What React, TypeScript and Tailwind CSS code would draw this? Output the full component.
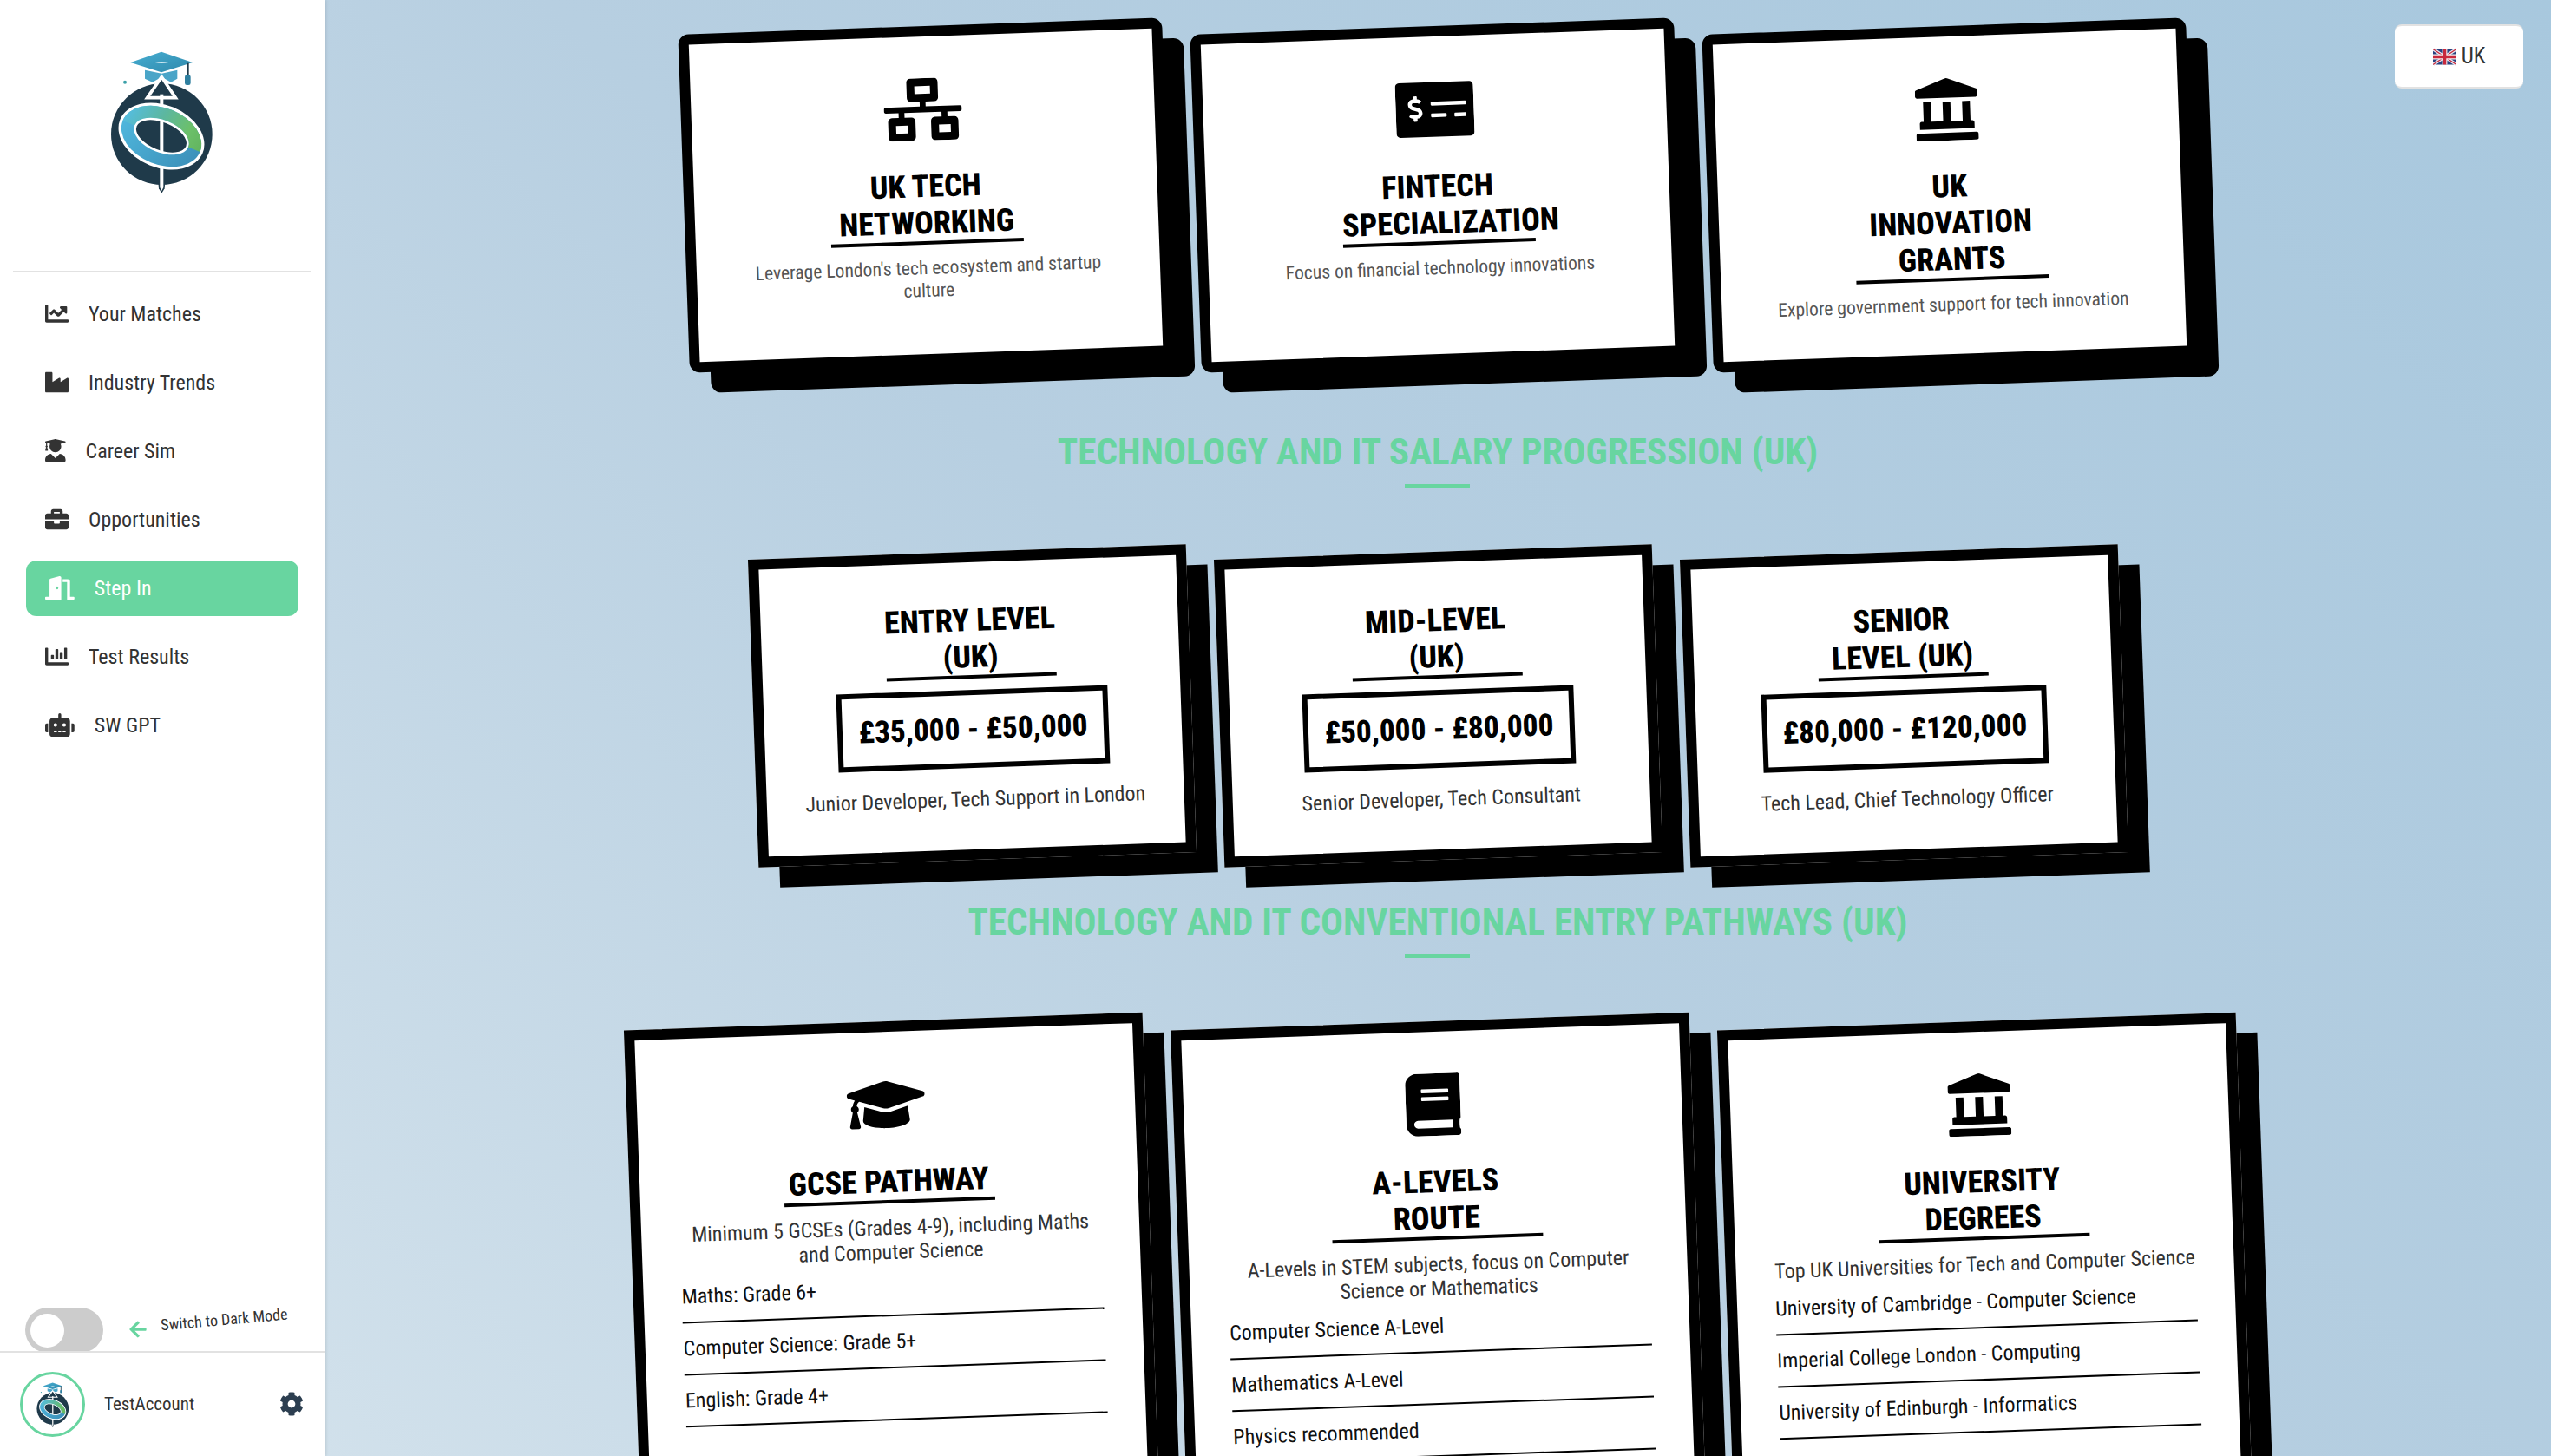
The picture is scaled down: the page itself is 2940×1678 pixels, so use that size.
import React from "react";
import {
  FaChartLine, FaIndustry, FaUserGraduate, FaBriefcase, FaDoorOpen, FaChartBar, FaRobot, FaCog, FaArrowLeft,
  FaNetworkWired, FaMoneyCheckAlt, FaLandmark, FaGraduationCap, FaBook,
} from "react-icons/fa";

function Logo({ className, id }: { className?: string; id: string }) {
  return (
    <svg viewBox="380 170 360 495" className={className}>
      <defs>
        <linearGradient id={`${id}-top`} gradientUnits="userSpaceOnUse" x1="413" y1="430" x2="700" y2="480">
          <stop offset="0" stopColor="#55bde0" />
          <stop offset="0.4" stopColor="#5cb7a0" />
          <stop offset="0.75" stopColor="#6cc06a" />
          <stop offset="1" stopColor="#62b45f" />
        </linearGradient>
        <linearGradient id={`${id}-bot`} gradientUnits="userSpaceOnUse" x1="420" y1="450" x2="690" y2="560">
          <stop offset="0" stopColor="#4fb6dc" />
          <stop offset="1" stopColor="#3b8fb8" />
        </linearGradient>
        <linearGradient id={`${id}-cap`} x1="0" y1="0" x2="1" y2="1">
          <stop offset="0" stopColor="#46aed2" />
          <stop offset="1" stopColor="#2f88ab" />
        </linearGradient>
      </defs>
      <circle cx="558" cy="460" r="175" fill="#1f3a4a" />
      <path d="M500 238 L558 250 L612 238 L612 268 L590 280 L558 262 L526 280 L500 268 Z" fill="#4aa5c8" />
      <path d="M450 212 L557 175 L665 212 L557 246 Z" fill={`url(#${id}-cap)`} />
      <path d="M535 212 Q557 206 582 212 Q557 218 535 212Z" fill="#cfe8f2" />
      <rect x="644" y="214" width="8" height="45" fill="#1f3a4a" />
      <rect x="638" y="255" width="20" height="35" rx="7" fill="#2f7f9f" />
      <circle cx="431" cy="280" r="6" fill="#3aa0a8" />
      <path d="M558 262 L508 334 L606 334 Z" fill="#1f3a4a" stroke="#fff" strokeWidth="11" strokeLinejoin="miter" />
      <path d="M546 625 L570 625 L568 648 L558 664 L548 648 Z" fill="#1f3a4a" />
      <rect x="552" y="322" width="12" height="322" fill="#fff" />
      <path d="M552 644 L564 644 L558 656 Z" fill="#fff" />
      <g transform="rotate(22 557 467)">
        <ellipse cx="557" cy="467" rx="154" ry="108" fill="#fff" />
        <ellipse cx="557" cy="467" rx="144" ry="98" fill={`url(#${id}-bot)`} />
        <path d="M413 467 A144 98 0 0 1 701 467 L657 467 A100 56 0 0 0 457 467 Z" fill={`url(#${id}-top)`} />
        <ellipse cx="557" cy="467" rx="100" ry="56" fill="#fff" />
        <ellipse cx="557" cy="467" rx="92" ry="48" fill="#1f3a4a" />
      </g>
      <rect x="552" y="412" width="12" height="112" fill="#fff" />
    </svg>
  );
}

const nav = [
  { label: "Your Matches", Icon: FaChartLine, w: "w-[27px]" },
  { label: "Industry Trends", Icon: FaIndustry, w: "w-[27px]" },
  { label: "Career Sim", Icon: FaUserGraduate, w: "w-[23.6px]" },
  { label: "Opportunities", Icon: FaBriefcase, w: "w-[27px]" },
  { label: "Step In", Icon: FaDoorOpen, w: "w-[33.75px]", active: true },
  { label: "Test Results", Icon: FaChartBar, w: "w-[27px]" },
  { label: "SW GPT", Icon: FaRobot, w: "w-[33.75px]" },
];

function Sidebar() {
  return (
    <aside className="w-[374px] shrink-0 h-full bg-white flex flex-col shadow-[2px_0_3px_rgba(0,0,0,0.1)] relative z-10">
      <div className="flex justify-center pt-[58px] h-[314px] mx-[15px] border-b-2 border-[#e2e2e2]">
        <Logo id="a" className="w-[120px] h-[165px]" />
      </div>
      <nav className="flex flex-col px-[30px] pt-[8px]">
        {nav.map(({ label, Icon, active, w }) => (
          <div
            key={label}
            className={
              active
                ? "h-[64px] my-[7.5px] rounded-xl bg-[#68d5a0] text-white flex items-center gap-[23px] px-[22px] text-[24px]"
                : "h-[64px] my-[7.5px] rounded-xl text-[#333] flex items-center gap-[23px] px-[22px] text-[24px]"
            }
          >
            <Icon className={`h-[27px] ${w} shrink-0`} />
            <span className="[font-stretch:75%]">{label}</span>
          </div>
        ))}
      </nav>
      <div className="mt-auto flex flex-col">
        <div className="flex items-center pl-[29px] h-[50px]">
          <div className="w-[90px] h-[52px] rounded-full bg-[#ccc] flex items-center pl-[6px] shrink-0 mt-[2px]">
            <div className="w-[39px] h-[39px] rounded-full bg-white" />
          </div>
          <FaArrowLeft className="ml-[29px] text-[#68d5a0] w-[22px] h-[22px] shrink-0" />
          <span className="ml-[15px] -mt-[24px] -rotate-[5deg] text-[18px] text-[#333] whitespace-nowrap [font-stretch:75%]">Switch to Dark Mode</span>
        </div>
        <div className="border-t-2 border-[#e2e2e2] h-[121px] flex items-center pl-[23px] pr-[24px]">
          <div className="w-[75px] h-[75px] rounded-full border-[3px] border-[#68d5a0] flex items-center justify-center shrink-0">
            <Logo id="b" className="w-[38px] h-[52px]" />
          </div>
          <span className="ml-[22px] text-[21px] text-[#333] [font-stretch:75%]">TestAccount</span>
          <FaCog className="ml-auto -mt-[2px] text-[#2c3e50] w-[28px] h-[28px]" />
        </div>
      </div>
    </aside>
  );
}

function Title({ lines, w }: { lines: string[]; w: string }) {
  return (
    <h3 className={`${w} border-b-4 border-black text-[36px] leading-[42px] font-extrabold text-black uppercase text-center [font-stretch:75%]`}>
      {lines.map((l) => (
        <div key={l} className="whitespace-nowrap">{l}</div>
      ))}
    </h3>
  );
}

const feats = [
  { Icon: FaNetworkWired, w: "w-[90px]", t: ["UK Tech", "Networking"], d: "Leverage London's tech ecosystem and startup culture" },
  { Icon: FaMoneyCheckAlt, w: "w-[90px]", t: ["Fintech", "Specialization"], d: "Focus on financial technology innovations" },
  { Icon: FaLandmark, w: "w-[72px]", t: ["UK", "Innovation", "Grants"], d: "Explore government support for tech innovation" },
];

const salaries = [
  { t: ["Entry Level", "(UK)"], s: "£35,000 - £50,000", d: "Junior Developer, Tech Support in London" },
  { t: ["Mid-Level", "(UK)"], s: "£50,000 - £80,000", d: "Senior Developer, Tech Consultant" },
  { t: ["Senior", "Level (UK)"], s: "£80,000 - £120,000", d: "Tech Lead, Chief Technology Officer" },
];

const paths = [
  {
    Icon: FaGraduationCap,
    w: "w-[90px]",
    t: ["GCSE Pathway"],
    d: "Minimum 5 GCSEs (Grades 4-9), including Maths and Computer Science",
    items: ["Maths: Grade 6+", "Computer Science: Grade 5+", "English: Grade 4+"],
  },
  {
    Icon: FaBook,
    w: "w-[63px]",
    t: ["A-Levels", "Route"],
    d: "A-Levels in STEM subjects, focus on Computer Science or Mathematics",
    items: ["Computer Science A-Level", "Mathematics A-Level", "Physics recommended"],
  },
  {
    Icon: FaLandmark,
    w: "w-[72px]",
    t: ["University", "Degrees"],
    d: "Top UK Universities for Tech and Computer Science",
    items: ["University of Cambridge - Computer Science", "Imperial College London - Computing", "University of Edinburgh - Informatics"],
  },
];

function SectionTitle({ children, className }: { children: string; className: string }) {
  return (
    <div className={`flex flex-col items-center ${className}`}>
      <h2 className="text-[43.2px] leading-[54px] font-bold text-[#68d5a0] uppercase text-center whitespace-nowrap [font-stretch:75%]">
        {children}
      </h2>
      <div className="w-[75px] h-1 bg-[#68d5a0] mt-[10px]" />
    </div>
  );
}

function Flag() {
  return (
    <svg viewBox="0 0 60 40" className="w-[27px] h-[21px] rounded-[2px]">
      <rect width="60" height="40" fill="#27407f" />
      <path d="M0 0 L60 40 M60 0 L0 40" stroke="#e8e8f0" strokeWidth="8" />
      <path d="M0 0 L60 40 M60 0 L0 40" stroke="#c8283c" strokeWidth="3" />
      <path d="M30 0 V40 M0 20 H60" stroke="#f4f0f0" strokeWidth="13" />
      <path d="M30 0 V40 M0 20 H60" stroke="#c8283c" strokeWidth="8" />
    </svg>
  );
}

export default function App() {
  return (
    <div className="h-[1678px] w-full flex overflow-hidden bg-[linear-gradient(45deg,#d6e4ed_0%,#b7cfe1_50%,#a8c8de_100%)] [font-family:Roboto,'Liberation_Sans',sans-serif]">
      <Sidebar />
      <main className="flex-1 min-w-0 h-full overflow-hidden relative flex flex-col items-center pt-[30px]">
        <div className="absolute top-[28px] right-[32px] w-[148px] h-[74px] bg-white rounded-lg border-y-2 border-[#e2e2e2] flex items-center justify-center gap-[6px] text-[25px] text-[#333]">
          <Flag />
          <span className="[font-stretch:75%]">UK</span>
        </div>

        <div className="grid grid-cols-3 gap-[32px] w-[1738px] shrink-0">
          {feats.map(({ Icon, w, t, d }) => (
            <div key={d} className="-rotate-2 bg-white border-[12px] border-black rounded-xl shadow-[24px_24px_0_#000] p-12 h-[390px] flex flex-col items-center text-center">
              <Icon className={`h-[72px] ${w} text-black shrink-0 mb-8`} />
              <Title lines={t} w="w-[222px]" />
              <p className="mt-[14px] text-[21.6px] leading-[26px] text-[#555] [font-stretch:75%]">{d}</p>
            </div>
          ))}
        </div>

        <SectionTitle className="mt-[74px]">Technology and IT Salary Progression (UK)</SectionTitle>

        <div className="grid grid-cols-3 gap-[32px] w-[1579px] shrink-0 mt-[74px]">
          {salaries.map(({ t, s, d }) => (
            <div key={d} className="-rotate-2 bg-white border-[12px] border-black shadow-[24px_24px_0_#000] pt-[46px] px-6 h-[355px] flex flex-col items-center text-center">
              <Title lines={t} w="w-[196px]" />
              <div className="mt-[13px] border-[6px] border-black px-[18px] h-[90px] flex items-center text-[35.2px] font-extrabold text-black whitespace-nowrap [font-stretch:75%]">
                {s}
              </div>
              <p className="mt-[22px] text-[24px] leading-[28px] text-[#333] [font-stretch:75%]">{d}</p>
            </div>
          ))}
        </div>

        <SectionTitle className="mt-[45px]">Technology and IT Conventional Entry Pathways (UK)</SectionTitle>

        <div className="grid grid-cols-3 gap-[32px] w-[1858px] shrink-0 mt-[73px]">
          {paths.map(({ Icon, w, t, d, items }) => (
            <div key={d} className="-rotate-2 bg-white border-[12px] border-black shadow-[24px_24px_0_#000] pt-12 px-[44px] h-[530px] flex flex-col items-center text-center">
              <Icon className={`h-[72px] ${w} text-black shrink-0 mb-8`} />
              <Title lines={t} w="w-[243px]" />
              <p className="mt-[14px] text-[24px] leading-[28px] text-[#333] [font-stretch:75%]">{d}</p>
              <ul className="w-full text-left">
                {items.map((i) => (
                  <li key={i} className="pt-[14px] pb-[15px] mt-[1px] border-b-2 border-black text-[24px] leading-[28px] text-[#111] [font-stretch:75%]">
                    {i}
                  </li>
                ))}
              </ul>
            </div>
          ))}
        </div>
      </main>
    </div>
  );
}
